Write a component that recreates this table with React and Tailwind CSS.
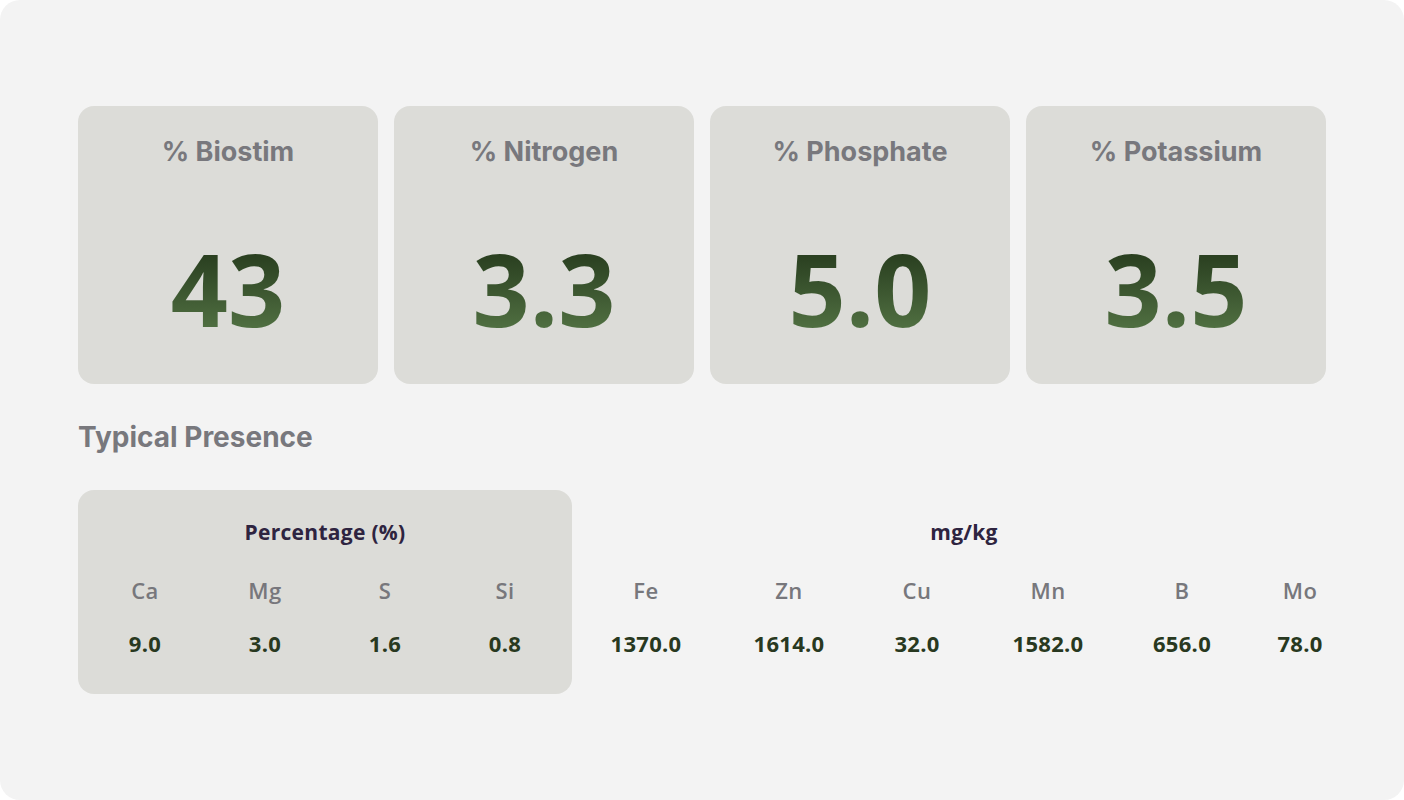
import React from 'react';

const stats = [
  { label: '% Biostim', value: '43' },
  { label: '% Nitrogen', value: '3.3' },
  { label: '% Phosphate', value: '5.0' },
  { label: '% Potassium', value: '3.5' },
];

const percent = [
  { el: 'Ca', v: '9.0' },
  { el: 'Mg', v: '3.0' },
  { el: 'S', v: '1.6' },
  { el: 'Si', v: '0.8' },
];

const mgkg = [
  { el: 'Fe', v: '1370.0' },
  { el: 'Zn', v: '1614.0' },
  { el: 'Cu', v: '32.0' },
  { el: 'Mn', v: '1582.0' },
  { el: 'B', v: '656.0' },
  { el: 'Mo', v: '78.0' },
];

const inter = { fontFamily: 'Inter, "Noto Sans", sans-serif' };
const geo = { fontFamily: '"Open Sans", "Noto Sans", sans-serif' };

const StatCard = ({ label, value }) => (
  <div className="h-[278px] rounded-2xl bg-[#dcdcd8] pt-[30px] flex flex-col items-center">
    <h3 style={inter} className="text-[27px] leading-8 font-bold text-[#78787d]">{label}</h3>
    <div
      style={geo}
      className="mt-[70px] text-[100px] leading-none font-bold bg-linear-to-b from-[#223519] to-[#557646] bg-clip-text text-transparent"
    >
      {value}
    </div>
  </div>
);

const ElementTable = ({ title, items, cols, className }) => (
  <div className={className}>
    <p style={geo} className="text-center text-[21px] leading-7 font-bold tracking-[0.3px] text-[#2e2440]">{title}</p>
    <div className={`grid ${cols} mt-[30px]`}>
      {items.map((it) => (
        <div key={it.el} className="flex flex-col items-center">
          <span style={geo} className="text-[22px] leading-7 font-semibold tracking-[0.5px] text-[#77777c]">{it.el}</span>
          <span style={geo} className="mt-[25px] text-[22px] leading-7 font-bold tracking-[0.3px] text-[#283820]">{it.v}</span>
        </div>
      ))}
    </div>
  </div>
);

export default function App() {
  return (
    <div className="w-[1404px] h-[800px] bg-white">
      <div className="h-full rounded-[20px] bg-[#f3f3f3] px-[78px] pt-[106px]">
        <div className="grid grid-cols-4 gap-4">
          {stats.map((s) => (
            <StatCard key={s.label} {...s} />
          ))}
        </div>

        <h2 style={inter} className="mt-[37px] text-[28px] leading-8 font-bold text-[#78787d]">Typical Presence</h2>

        <div className="mt-[37px] flex">
          <ElementTable
            title="Percentage (%)"
            items={percent}
            cols="grid-cols-4"
            className="w-[494px] shrink-0 rounded-2xl bg-[#dcdcd8] px-[7px] pt-[28px] pb-[37px]"
          />
          <ElementTable
            title="mg/kg"
            items={mgkg}
            cols="grid-cols-[148px_138px_118px_144px_124px_112px]"
            className="w-[784px] shrink-0 pt-[28px] pb-[37px]"
          />
        </div>
      </div>
    </div>
  );
}
